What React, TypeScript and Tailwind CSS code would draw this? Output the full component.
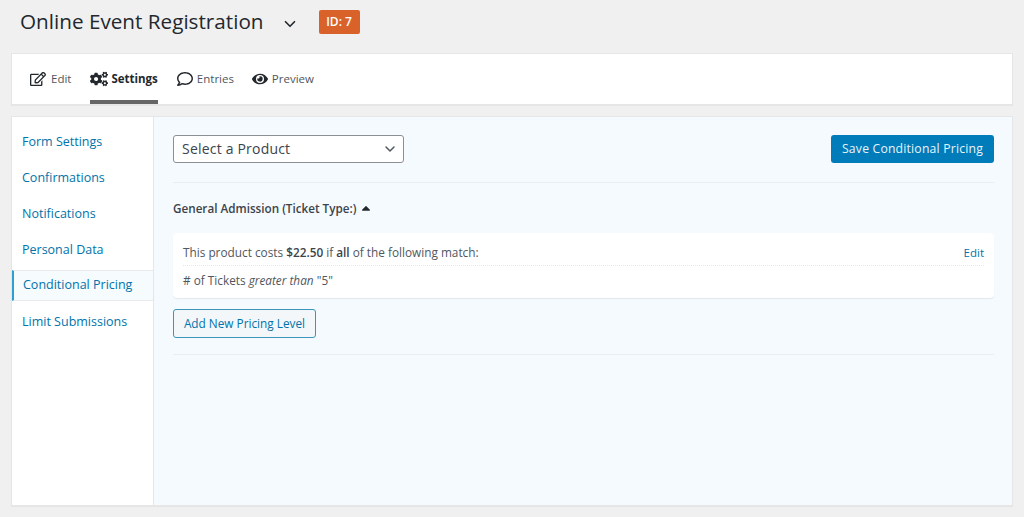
import { FaCaretUp, FaCogs, FaEye, FaRegComment, FaRegEdit } from "react-icons/fa";
import { ChevronDown } from "lucide-react";

const tabs = [
  { label: "Edit", Icon: FaRegEdit, active: false, box: "gap-[5px]" },
  { label: "Settings", Icon: FaCogs, active: true, box: "gap-[3px]" },
  { label: "Entries", Icon: FaRegComment, active: false, box: "w-[56px] gap-1" },
  { label: "Preview", Icon: FaEye, active: false, box: "gap-1" },
];

const sideLinks = ["Form Settings", "Confirmations", "Notifications", "Personal Data", "Conditional Pricing", "Limit Submissions"];

export default function App() {
  return (
    <div className="h-[517px] overflow-hidden bg-[#f0f0f1] px-[11px] font-['Open_Sans',sans-serif] text-[#3c434a]">
      {/* Title row */}
      <div className="flex h-[53px] items-start pl-[9px] pt-[10px]">
        <h1 className="-mt-px h-6 text-[20.7px] leading-6 text-[#23282d]">Online Event Registration</h1>
        <ChevronDown className="ml-[17px] mt-[5px] h-[18px] w-[18px] text-[#23282d]" strokeWidth={2.2} />
        <span className="ml-[20px] flex h-6 w-[41px] items-center justify-center rounded-[2px] bg-[#d9622b] text-[12px] font-semibold text-white">ID: 7</span>
      </div>

      {/* Tabs */}
      <div className="flex h-[52px] gap-[19px] border border-[#e6e6e6] bg-white pl-[18px] shadow-[0_1px_1px_rgba(0,0,0,0.04)]">
        {tabs.map(({ label, Icon, active, box }) => (
          <div key={label} className={`flex h-[50px] items-center border-b-[4px] pt-[4px] text-[11.5px] ${box} ${active ? "border-[#666] font-bold text-[#23282d]" : "border-transparent text-[#50575e]"}`}>
            <Icon className={`shrink-0 text-[#23282d] ${active ? "h-[18px] w-[18px]" : "h-4 w-4"}`} />
            <span>{label}</span>
          </div>
        ))}
      </div>

      {/* Settings panel */}
      <div className="mt-[11px] flex h-[390px] border border-[#e6e6e6] bg-white shadow-[0_1px_1px_rgba(0,0,0,0.04)]">
        <nav className="w-[141px] shrink-0 pt-[7px]">
          {sideLinks.map((link) =>
            link === "Conditional Pricing" ? (
              <div key={link} className="mb-[3px] mt-[2px] flex h-[31px] items-center border-y border-l-[2px] border-y-[#e8eaec] border-l-[#2e9fce] bg-[#f6fbfe] pl-[9px] text-[12.5px] text-[#0073aa]">{link}</div>
            ) : (
              <div key={link} className="flex h-9 items-center pl-[10px] text-[12.5px] text-[#0073aa]">{link}</div>
            )
          )}
        </nav>

        <main className="flex-1 border-l border-[#e6e6e6] bg-[#f5fafe] pl-[19px] pr-[18px] pt-[18px]">
          <div className="flex items-start justify-between border-b border-[#ebeef0] pb-[19px]">
            <div className="flex h-[28px] w-[231px] items-center justify-between rounded-[3px] border border-[#8c8f94] bg-white pl-2 pr-[5px] text-[14px] tracking-[0.2px] text-[#3c434a]">
              <span className="-mt-px">Select a Product</span>
              <ChevronDown className="h-4 w-4 text-[#50575e]" strokeWidth={2.2} />
            </div>
            <button className="h-[28px] w-[163px] rounded-[3px] bg-[#007cba] pt-px text-[12.2px] font-medium tracking-[0.2px] text-[#e8f4fa]">Save Conditional Pricing</button>
          </div>

          <div className="flex h-[50px] items-center gap-[3px] pt-[2px] text-[11.7px] font-semibold text-[#3c434a]">
            <span>General Admission (Ticket Type:)</span>
            <FaCaretUp className="-mt-[3px] h-[14px] w-[14px] text-[#23282d]" />
          </div>

          <div className="rounded-[4px] bg-white px-[10px] shadow-[0_1px_1px_rgba(0,0,0,0.08)]">
            <div className="flex h-[33px] items-center justify-between border-b border-dotted border-[#e6e6e6] pt-[8px] text-[11.8px] text-[#50575e]">
              <span>This product costs <b className="font-semibold text-[#3c434a]">$22.50</b> if <b className="font-semibold text-[#3c434a]">all</b> of the following match:</span>
              <span className="text-[11.5px] text-[#0073aa]">Edit</span>
            </div>
            <div className="flex h-[32px] items-center pb-[2px] text-[11.8px] text-[#50575e]">
              <span># of Tickets <i>greater than</i> "5"</span>
            </div>
          </div>

          <div className="mt-[11px] border-b border-[#ebeef0] pb-[16px]">
            <button className="h-[29px] w-[143px] rounded-[3px] border border-[#3a96bb] bg-[#f3f7fa] text-[11.8px] text-[#0073aa]">Add New Pricing Level</button>
          </div>
        </main>
      </div>
    </div>
  );
}
